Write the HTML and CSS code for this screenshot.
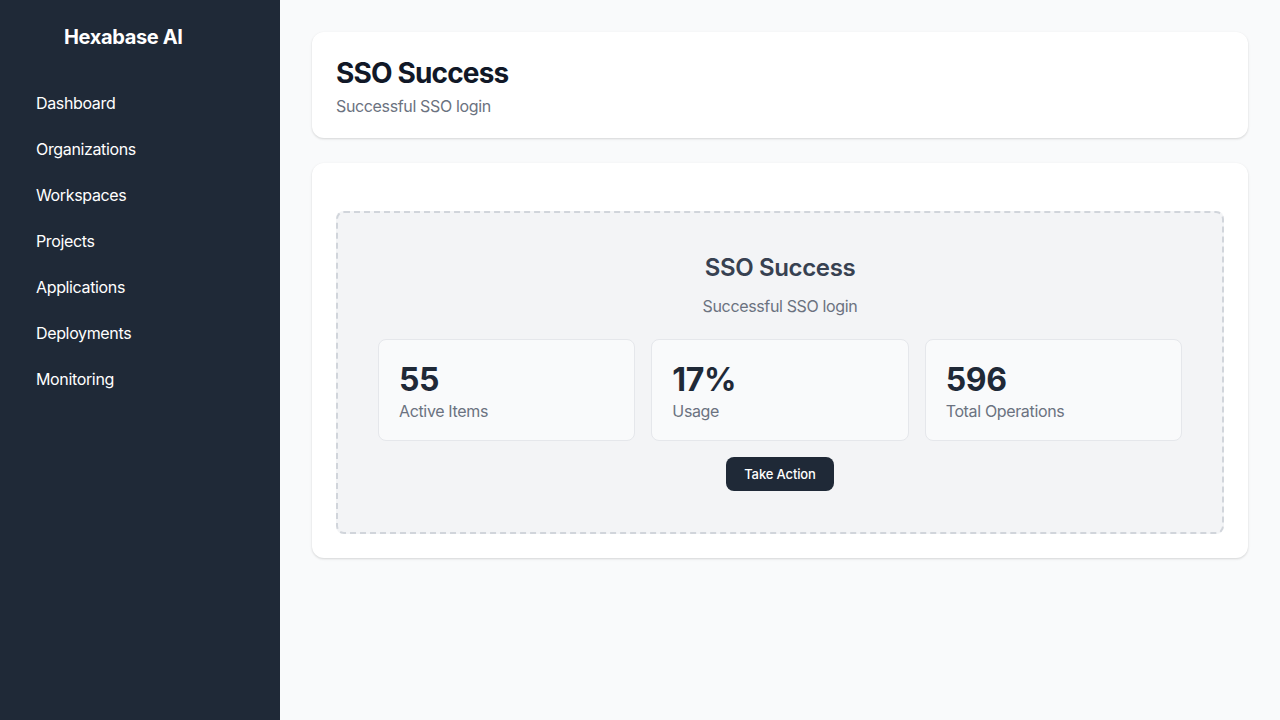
FILE: index.html
```html
<!DOCTYPE html>
<html lang="en">
<head>
<meta charset="utf-8">
<title>SSO Success</title>
<link rel="stylesheet" href="styles.css">
</head>
<body>
<div class="layout">
  <aside class="sidebar">
    <div class="brand">Hexabase AI</div>
    <nav class="nav">
      <a class="nav-item">Dashboard</a>
      <a class="nav-item">Organizations</a>
      <a class="nav-item">Workspaces</a>
      <a class="nav-item">Projects</a>
      <a class="nav-item">Applications</a>
      <a class="nav-item">Deployments</a>
      <a class="nav-item">Monitoring</a>
    </nav>
  </aside>
  <main class="main">
    <section class="card header-card">
      <h1 class="page-title">SSO Success</h1>
      <p class="page-sub">Successful SSO login</p>
    </section>
    <section class="card content-card">
      <div class="placeholder">
        <h2 class="ph-title">SSO Success</h2>
        <p class="ph-sub">Successful SSO login</p>
        <div class="stats">
          <div class="stat"><div class="stat-num">55</div><div class="stat-label">Active Items</div></div>
          <div class="stat"><div class="stat-num">17%</div><div class="stat-label">Usage</div></div>
          <div class="stat"><div class="stat-num">596</div><div class="stat-label">Total Operations</div></div>
        </div>
        <button class="btn">Take Action</button>
      </div>
    </section>
  </main>
</div>
</body>
</html>
```

FILE: styles.css
```css
* { box-sizing: border-box; }
html, body { margin: 0; padding: 0; }
body {
  font-family: Inter, "Noto Sans", "Liberation Sans", sans-serif;
  letter-spacing: -0.022em;
  background: #f9fafb;
  color: #111827;
}
.layout { display: flex; min-height: 720px; }
.sidebar {
  width: 280px;
  flex: 0 0 280px;
  background: #1f2937;
  color: #fff;
  padding: 24px 0;
}
.brand {
  font-size: 20px;
  font-weight: 700;
  line-height: 26px;
  padding-left: 64px;
  margin-bottom: 30px;
}
.nav { display: flex; flex-direction: column; }
.nav-item {
  display: block;
  padding: 12px 36px;
  font-size: 16px;
  line-height: 22px;
  color: #fff;
}
.main {
  flex: 1;
  padding: 32px;
  display: flex;
  flex-direction: column;
  gap: 25px;
}
.card {
  background: #fff;
  border-radius: 12px;
  box-shadow: 0 1px 3px rgba(0,0,0,0.1), 0 1px 2px rgba(0,0,0,0.06);
  padding: 24px;
}
.header-card { padding: 24px 24px 20px; }
.page-title {
  margin: 0;
  font-size: 28px;
  line-height: 34px;
  font-weight: 700;
  letter-spacing: -0.03em;
  color: #111827;
}
.page-sub {
  margin: 4px 0 0;
  font-size: 16px;
  line-height: 24px;
  color: #6b7280;
}
.content-card { padding: 48px 24px 24px; }
.placeholder {
  background: #f3f4f6;
  border: 2px dashed #d1d5db;
  border-radius: 8px;
  padding: 40px 40px 41px;
  text-align: center;
}
.ph-title {
  margin: 0;
  font-size: 24px;
  line-height: 30px;
  font-weight: 600;
  color: #374151;
}
.ph-sub {
  margin: 11px 0 0;
  font-size: 16px;
  line-height: 24px;
  color: #6b7280;
}
.stats {
  margin-top: 21px;
  display: grid;
  grid-template-columns: repeat(3, 1fr);
  gap: 16px;
  text-align: left;
}
.stat {
  background: #f9fafb;
  border: 1px solid #e5e7eb;
  border-radius: 8px;
  padding: 20px;
  height: 102px;
}
.stat-num {
  font-size: 32px;
  line-height: 40px;
  font-weight: 700;
  color: #1f2937;
}
.stat-label {
  font-size: 16px;
  line-height: 22px;
  color: #6b7280;
}
.btn {
  display: block;
  margin: 16px auto 0;
  background: #1f2937;
  color: #fff;
  border: none;
  border-radius: 8px;
  width: 108px;
  height: 34px;
  font-family: inherit;
  letter-spacing: -0.01em;
  font-size: 13px;
  font-weight: 500;
}
```
